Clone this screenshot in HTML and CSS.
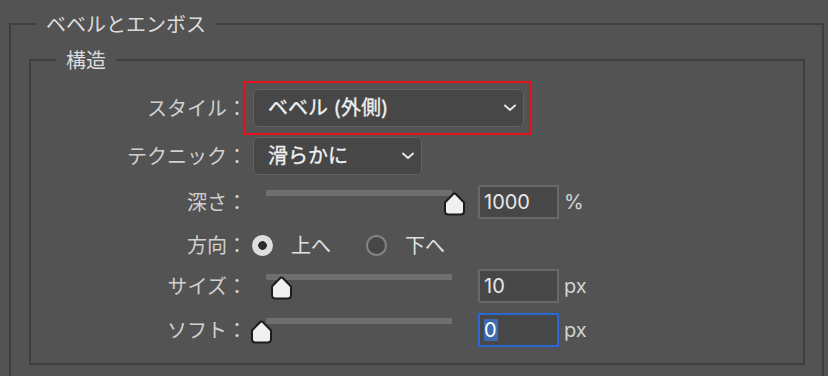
FILE: index.html
```html
<!DOCTYPE html>
<html lang="ja">
<head>
<meta charset="utf-8">
<title>ベベルとエンボス</title>
<link rel="stylesheet" href="styles.css">
</head>
<body>
<fieldset class="group outer">
  <legend class="group-title">ベベルとエンボス</legend>
  <fieldset class="group inner">
    <legend class="group-title">構造</legend>

    <div class="row row-style">
      <span class="label">スタイル：</span>
      <div class="highlight">
        <div class="select select-wide">
          <span class="select-text">ベベル (外側)</span>
          <svg class="chevron" width="12" height="8" viewBox="0 0 12 8"><polyline points="1,1.5 6,6 11,1.5" fill="none" stroke="#e4e4e4" stroke-width="2" stroke-linecap="round" stroke-linejoin="round"/></svg>
        </div>
      </div>
    </div>

    <div class="row row-tech">
      <span class="label">テクニック：</span>
      <div class="select select-narrow">
        <span class="select-text">滑らかに</span>
        <svg class="chevron" width="12" height="8" viewBox="0 0 12 8"><polyline points="1,1.5 6,6 11,1.5" fill="none" stroke="#e4e4e4" stroke-width="2" stroke-linecap="round" stroke-linejoin="round"/></svg>
      </div>
    </div>

    <div class="row row-depth">
      <span class="label">深さ：</span>
      <div class="slider">
        <div class="track"></div>
        <svg class="thumb" style="left:196px" width="23" height="24" viewBox="0 0 23 24"><path d="M11.5 1.5 Q12.3 1.5 13 2.2 L21 10.5 V19 Q21 22.5 17.5 22.5 H5.5 Q2 22.5 2 19 V10.5 L10 2.2 Q10.7 1.5 11.5 1.5 Z" fill="#f0f0f0" stroke="#1c1c1c" stroke-width="2" stroke-linejoin="round"/></svg>
      </div>
      <div class="field"><span class="field-text">1000</span></div>
      <span class="unit">%</span>
    </div>

    <div class="row row-dir">
      <span class="label">方向：</span>
      <div class="radios">
        <span class="radio radio-on"></span>
        <span class="radio-text">上へ</span>
        <span class="radio radio-off"></span>
        <span class="radio-text">下へ</span>
      </div>
    </div>

    <div class="row row-size">
      <span class="label">サイズ：</span>
      <div class="slider">
        <div class="track"></div>
        <svg class="thumb" style="left:23px" width="23" height="24" viewBox="0 0 23 24"><path d="M11.5 1.5 Q12.3 1.5 13 2.2 L21 10.5 V19 Q21 22.5 17.5 22.5 H5.5 Q2 22.5 2 19 V10.5 L10 2.2 Q10.7 1.5 11.5 1.5 Z" fill="#f0f0f0" stroke="#1c1c1c" stroke-width="2" stroke-linejoin="round"/></svg>
      </div>
      <div class="field"><span class="field-text">10</span></div>
      <span class="unit">px</span>
    </div>

    <div class="row row-soft">
      <span class="label">ソフト：</span>
      <div class="slider">
        <div class="track"></div>
        <svg class="thumb" style="left:3px" width="23" height="24" viewBox="0 0 23 24"><path d="M11.5 1.5 Q12.3 1.5 13 2.2 L21 10.5 V19 Q21 22.5 17.5 22.5 H5.5 Q2 22.5 2 19 V10.5 L10 2.2 Q10.7 1.5 11.5 1.5 Z" fill="#f0f0f0" stroke="#1c1c1c" stroke-width="2" stroke-linejoin="round"/></svg>
      </div>
      <div class="field field-focus"><span class="field-text"><span class="selected">0</span></span></div>
      <span class="unit">px</span>
    </div>
  </fieldset>
</fieldset>
</body>
</html>
```

FILE: styles.css
```css
html, body {
  margin: 0;
  padding: 0;
  background: #535353;
  overflow: hidden;
  height: 376px;
}

body {
  font-family: Inter, "Noto Sans CJK JP", sans-serif;
  font-size: 20px;
  color: #d2d2d2;
  padding-top: 10px;
  box-sizing: border-box;
}

.group {
  border: 2px solid #3f3f3f;
  min-width: 0;
}

.outer {
  margin: 0 4px 0 9px;
  padding: 8px 17px 12px 18px;
}

.inner {
  margin: 0;
  padding: 7px 0 16px 0;
}

.group-title {
  font-family: "Noto Sans CJK JP", sans-serif;
  line-height: 28px;
  padding: 0 10px;
  color: #dcdcdc;
}

.outer > .group-title {
  margin-left: 7px;
}

.inner > .group-title {
  margin-left: 25px;
}

.row {
  display: flex;
  align-items: center;
}

.label {
  width: 216px;
  flex: none;
  text-align: right;
  font-family: "Noto Sans CJK JP", sans-serif;
  line-height: 28px;
  color: #d0d0d0;
}

.highlight {
  margin-left: -3px;
  border: 2px solid #e3101a;
  padding: 6px 5px 6px 7px;
}

.select {
  box-sizing: border-box;
  height: 38px;
  border: 1.5px solid #626262;
  border-radius: 5px;
  background: #474747;
  display: flex;
  align-items: center;
  justify-content: space-between;
  padding: 0 7px 0 14px;
}

.select-wide {
  width: 271px;
}

.select-narrow {
  width: 169px;
  margin-left: 6px;
}

.select-text {
  font-family: Inter, "Noto Sans CJK JP", sans-serif;
  font-weight: 400;
  color: #f0f0f0;
  line-height: 28px;
  -webkit-text-stroke: 0.3px #f0f0f0;
}

.chevron {
  display: block;
  flex: none;
}

.row-tech { margin-top: 2px; }
.row-depth { margin-top: 10px; }
.row-dir { margin-top: 14px; height: 24px; }
.row-size { margin-top: 12px; }
.row-soft { margin-top: 10px; }

.slider {
  position: relative;
  width: 231px;
  height: 34px;
  flex: none;
}

.track {
  margin-left: 19px;
  margin-top: 5px;
  width: 186px;
  height: 6px;
  background: #6f6f6f;
}

.thumb {
  position: absolute;
  top: 7px;
  display: block;
}

.field {
  box-sizing: border-box;
  width: 81px;
  height: 34px;
  border: 2px solid #686868;
  background: #474747;
  padding-left: 4px;
  display: flex;
  align-items: center;
  flex: none;
}

.field-focus {
  border-color: #2a68d4;
}

.field-text {
  color: #e8e8e8;
  line-height: 28px;
}

.selected {
  display: inline-block;
  background: #3d6bb2;
  color: #ffffff;
  line-height: 22px;
  padding: 0 1px 0 0;
}

.unit {
  margin-left: 5px;
  color: #d4d4d4;
  line-height: 28px;
}

.radios {
  display: flex;
  align-items: center;
  margin-left: 5px;
}

.radio {
  box-sizing: border-box;
  width: 21px;
  height: 21px;
  border-radius: 50%;
  flex: none;
}

.radio-on {
  background: radial-gradient(circle, #2c2c2c 0 4px, #dedede 4.6px);
}

.radio-off {
  background: #474747;
  border: 2px solid #858585;
  margin-left: 35px;
}

.radio-text {
  margin-left: 18px;
  font-family: "Noto Sans CJK JP", sans-serif;
  color: #e2e2e2;
  line-height: 24px;
}
```
